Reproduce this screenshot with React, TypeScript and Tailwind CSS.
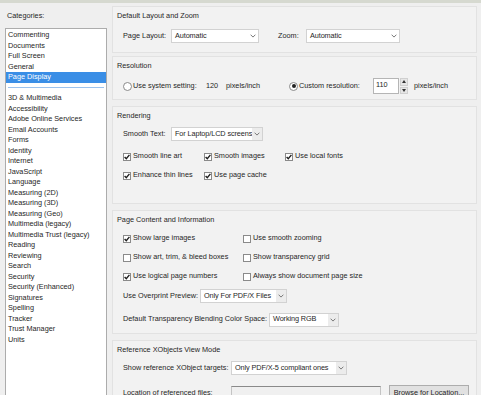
import React from "react";

const categories: (string | null)[] = [
    "Commenting",
    "Documents",
    "Full Screen",
    "General",
    "Page Display",
    null,
    "3D & Multimedia",
    "Accessibility",
    "Adobe Online Services",
    "Email Accounts",
    "Forms",
    "Identity",
    "Internet",
    "JavaScript",
    "Language",
    "Measuring (2D)",
    "Measuring (3D)",
    "Measuring (Geo)",
    "Multimedia (legacy)",
    "Multimedia Trust (legacy)",
    "Reading",
    "Reviewing",
    "Search",
    "Security",
    "Security (Enhanced)",
    "Signatures",
    "Spelling",
    "Tracker",
    "Trust Manager",
    "Units",
];

function Label({ className = "", children }: { className?: string; children: React.ReactNode }) {
    return <span className={`${className} shrink-0 whitespace-nowrap`}>{children}</span>;
}

function Chevron() {
    return (
        <svg width="6" height="4" viewBox="0 0 6 4">
            <path d="M0.6 0.7 L3 3.1 L5.4 0.7" stroke="#777" strokeWidth="1" fill="none" />
        </svg>
    );
}

function Select({ value, className, grey }: { value: string; className: string; grey?: boolean }) {
    return (
        <div className={`${className} shrink-0 h-[14px] bg-white border border-[#d2d2d2] flex items-center`}>
            <span className="flex-1 pl-[3px] whitespace-nowrap tracking-[-0.1px]">{value}</span>
            <span className={`w-[10px] h-full shrink-0 flex items-center justify-center ${grey ? "bg-[#ececec]" : ""}`}>
                <Chevron />
            </span>
        </div>
    );
}

function Check({ on, label }: { on?: boolean; label: string }) {
    return (
        <div className="flex items-center">
            <span className="w-[8px] h-[8px] border border-[#8a8a8a] bg-white flex items-center justify-center shrink-0">
                {on && (
                    <svg width="6" height="6" viewBox="0 0 6 6">
                        <path d="M0.6 3 L2.3 4.8 L5.4 0.9" stroke="#1e1e1e" strokeWidth="1.4" fill="none" />
                    </svg>
                )}
            </span>
            <span className="ml-[2px] whitespace-nowrap">{label}</span>
        </div>
    );
}

function Radio({ on }: { on?: boolean }) {
    return (
        <span className="w-[9px] h-[9px] rounded-full border border-[#8a8a8a] bg-white flex items-center justify-center shrink-0">
            {on && <span className="w-[4px] h-[4px] rounded-full bg-[#222]" />}
        </span>
    );
}

function Section({ title, className, children }: { title: string; className: string; children: React.ReactNode }) {
    return (
        <section className={`${className} border border-[#e2e2e2] bg-[#f2f2f2] flex flex-col`}>
            <div className="h-[18px] pt-[3px] pl-[4px] leading-[11px]">{title}</div>
            <div className="pl-[10px] flex flex-col">{children}</div>
        </section>
    );
}

export default function App() {
    return (
        <div className="w-[481px] h-[395px] overflow-hidden bg-[#efefef] flex flex-col text-[7.3px] leading-[10.5px] text-[#262626] font-['Liberation_Sans',Arial,sans-serif]">
            <div className="h-[3px] bg-[#d6d9d0] shrink-0" />
            <div className="flex flex-1">
                {/* Categories */}
                <div className="w-[112px] shrink-0 flex flex-col pt-[7px]">
                    <div className="pl-[7px] leading-[11px]">Categories:</div>
                    <div className="ml-[5px] mt-[7px] w-[102px] h-[380px] bg-white border border-[#acacac] pt-[1px]">
                        {categories.map((c, i) =>
                            c === null ? (
                                <div key={i} className="h-[10.5px] flex items-center px-[2px]">
                                    <div className="h-px w-full bg-[#9cc3ee]" />
                                </div>
                            ) : (
                                <div
                                    key={i}
                                    className={`h-[10.5px] pl-[2px] whitespace-nowrap ${c === "Page Display" ? "bg-[#3a8ee6] text-white" : ""}`}
                                >
                                    {c}
                                </div>
                            )
                        )}
                    </div>
                </div>

                {/* Settings */}
                <div className="flex-1 pr-[4px] flex flex-col">
                    <Section title="Default Layout and Zoom" className="mt-[3px] h-[47px] shrink-0">
                        <div className="h-[22px] flex items-center">
                            <Label className="w-[48px]">Page Layout:</Label>
                            <Select value="Automatic" className="w-[88px]" />
                            <Label className="ml-[19px] w-[28px]">Zoom:</Label>
                            <Select value="Automatic" className="w-[94px]" />
                        </div>
                    </Section>

                    <Section title="Resolution" className="mt-[3px] h-[44px] shrink-0">
                        <div className="h-[22px] flex items-center">
                            <Radio />
                            <Label className="ml-[1px] w-[73px]">Use system setting:</Label>
                            <Label className="w-[20px]">120</Label>
                            <Label className="w-[63px]">pixels/inch</Label>
                            <Radio on />
                            <Label className="ml-[1px] w-[74px]">Custom resolution:</Label>
                            <div className="w-[26px] h-[16px] shrink-0 bg-white border border-[#b5b5b5] pl-[2px] leading-[12px]">110</div>
                            <div className="ml-[1px] w-[8px] h-[16px] shrink-0 flex flex-col gap-[1px]">
                                <div className="flex-1 bg-[#e6e6e6] border border-[#d0d0d0] flex items-center justify-center">
                                    <svg width="4" height="3" viewBox="0 0 4 3"><path d="M0 3 L2 0 L4 3 Z" fill="#333" /></svg>
                                </div>
                                <div className="flex-1 bg-[#e6e6e6] border border-[#d0d0d0] flex items-center justify-center">
                                    <svg width="4" height="3" viewBox="0 0 4 3"><path d="M0 0 L2 3 L4 0 Z" fill="#333" /></svg>
                                </div>
                            </div>
                            <Label className="ml-[6px]">pixels/inch</Label>
                        </div>
                    </Section>

                    <Section title="Rendering" className="mt-[6px] h-[98px] shrink-0">
                        <div className="h-[18px] flex items-center">
                            <Label className="w-[48px]">Smooth Text:</Label>
                            <Select value="For Laptop/LCD screens" className="w-[92px]" grey />
                        </div>
                        <div className="mt-[4px] h-[19px] flex items-center">
                            <div className="w-[81px] shrink-0"><Check on label="Smooth line art" /></div>
                            <div className="w-[81px] shrink-0"><Check on label="Smooth images" /></div>
                            <Check on label="Use local fonts" />
                        </div>
                        <div className="h-[19px] flex items-center">
                            <div className="w-[81px] shrink-0"><Check on label="Enhance thin lines" /></div>
                            <Check on label="Use page cache" />
                        </div>
                    </Section>

                    <Section title="Page Content and Information" className="mt-[6px] h-[124px] shrink-0">
                        <div className="h-[19px] flex items-center">
                            <div className="w-[120px] shrink-0"><Check on label="Show large images" /></div>
                            <Check label="Use smooth zooming" />
                        </div>
                        <div className="h-[19px] flex items-center">
                            <div className="w-[120px] shrink-0"><Check label="Show art, trim, & bleed boxes" /></div>
                            <Check label="Show transparency grid" />
                        </div>
                        <div className="h-[19px] flex items-center">
                            <div className="w-[120px] shrink-0"><Check on label="Use logical page numbers" /></div>
                            <Check label="Always show document page size" />
                        </div>
                        <div className="h-[20px] flex items-center">
                            <Label className="w-[77px]">Use Overprint Preview:</Label>
                            <Select value="Only For PDF/X Files" className="w-[87px]" grey />
                        </div>
                        <div className="h-[27px] flex items-center">
                            <Label className="w-[146px]">Default Transparency Blending Color Space:</Label>
                            <Select value="Working RGB" className="w-[70px]" grey />
                        </div>
                    </Section>

                    <Section title="Reference XObjects View Mode" className="mt-[6px] h-[70px] shrink-0">
                        <div className="h-[18px] flex items-center">
                            <Label className="w-[108px]">Show reference XObject targets:</Label>
                            <Select value="Only PDF/X-5 compliant ones" className="w-[116px]" grey />
                        </div>
                        <div className="mt-[8px] flex items-start">
                            <Label className="w-[108px] pt-[3px]">Location of referenced files:</Label>
                            <div className="w-[150px] h-[16px] shrink-0 mt-[1px] border border-[#c4c4c4] border-t-[#8a8a8a] bg-[#f0f0f0]" />
                            <div className="ml-[8px] w-[80px] h-[16px] shrink-0 border border-[#adadad] bg-[#e1e1e1] text-center leading-[14px] whitespace-nowrap">
                                Browse for Location...
                            </div>
                        </div>
                    </Section>
                </div>
            </div>
        </div>
    );
}
